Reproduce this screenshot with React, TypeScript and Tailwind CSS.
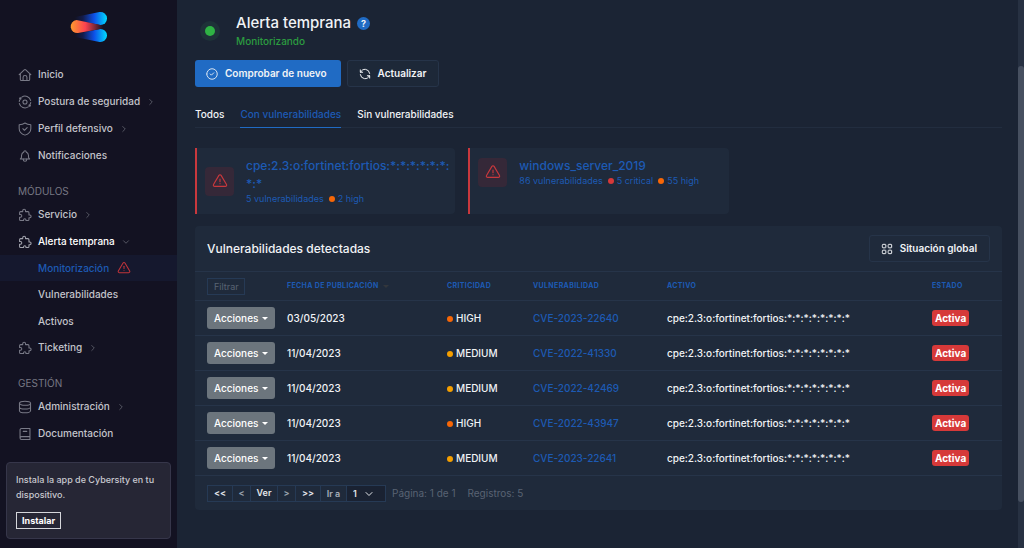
import React from 'react';
import { TbRefresh, TbCircleCheck, TbLayoutGrid, TbAlertTriangle, TbChevronRight, TbChevronDown, TbBell } from 'react-icons/tb';

const stroke = {
    viewBox: '0 0 24 24',
    fill: 'none',
    stroke: 'currentColor',
    strokeWidth: 1.8,
    strokeLinecap: 'round' as const,
    strokeLinejoin: 'round' as const,
};

const HomeIcon = () => (
    <svg {...stroke} className="size-3.5">
        <path d="M2 11.5l8.700-8.300a1.900 1.900 0 0 1 2.600 0L22 11.500M4 10v9.500A2 2 0 0 0 6 21.500h12a2 2 0 0 0 2-2V10M8.700 21.500V16a3.300 3.300 0 0 1 6.600 0v5.500" />
    </svg>
);

const PuzzleIcon = () => (
    <svg {...stroke} className="size-3.5">
        <path d="M17 21.5h-3.4v-1.2a2 2 0 0 0-4 0v1.2H4.5a1.8 1.8 0 0 1-1.8-1.8v-4h1.6a2.2 2.2 0 0 0 0-4.4H2.700V8a1.8 1.8 0 0 1 1.8-1.8h3.600V4.600a2.400 2.400 0 0 1 4.800 0v1.600H17A1.800 1.800 0 0 1 18.800 8v4h1.400a2.300 2.300 0 0 1 0 4.600h-1.400v3.100a1.800 1.800 0 0 1-1.800 1.800z" />
    </svg>
);

const PostureIcon = () => (
    <svg {...stroke} className="size-3.5">
        <path d="M2.200 14.500A10 10 0 0 0 17.500 20.400M21.800 9.500A10 10 0 0 0 6.500 3.600M2.200 11a10 10 0 0 1 .8-2.500M21.800 13a10 10 0 0 1-.8 2.500" />
        <circle cx="12" cy="12" r="3.500" />
        <circle cx="4" cy="6" r="1.200" fill="currentColor" />
        <circle cx="20" cy="18" r="1.200" fill="currentColor" />
    </svg>
);

const ShieldIcon = () => (
    <svg {...stroke} className="size-3.5">
        <path d="M12 1.700c2.800 2 6 2.900 10 3v6.300c0 5.500-4 9.500-10 11.500-6-2-10-6-10-11.500V4.700c4-.1 7.200-1 10-3zM8.300 11.500l2.700 2.700 4.700-4.700" />
    </svg>
);

const BookIcon = () => (
    <svg {...stroke} className="size-3.5">
        <path d="M3.500 19V5A2.500 2.500 0 0 1 6 2.500H20.500v19H6a2.500 2.500 0 0 1 0-5H20.500M9 7.500h6" />
    </svg>
);

const DatabaseIcon = () => (
    <svg {...stroke} className="size-3.5">
        <ellipse cx="12" cy="5.500" rx="9.500" ry="3.500" />
        <path d="M2.500 5.500v13c0 2 4.300 3.500 9.500 3.500s9.500-1.500 9.500-3.500v-13M2.500 12c0 2 4.300 3.500 9.500 3.500s9.500-1.500 9.500-3.500" />
    </svg>
);

const Logo = () => (
    <svg viewBox="0 0 38 32" className="w-[38px] h-8">
        <defs>
            <linearGradient id="blue" x1="0" x2="1">
                <stop offset="0" stopColor="#131222" />
                <stop offset="0.25" stopColor="#131c4c" />
                <stop offset="0.6" stopColor="#0d50e8" />
                <stop offset="1" stopColor="#00dcff" />
            </linearGradient>
            <linearGradient id="orange" x1="0" x2="1">
                <stop offset="0" stopColor="#ff9a2e" />
                <stop offset="0.45" stopColor="#fb4350" />
                <stop offset="1" stopColor="#131222" />
            </linearGradient>
        </defs>
        <path d="M5 6L29.500 1.100A6.500 6.500 0 1 1 30 14L5 9z" fill="url(#blue)" />
        <path d="M5 23L30 18A6.500 6.500 0 1 1 29.500 30.900L5 26z" fill="url(#blue)" />
        <path d="M6.500 9L33 14.500V17.500L8 22A6.500 6.500 0 1 1 6.500 9z" fill="url(#orange)" />
    </svg>
);

type NavItemProps = {
    icon: React.ReactNode;
    label: string;
    arrow?: 'right' | 'down';
};

const NavItem = ({ icon, label, arrow }: NavItemProps) => (
    <a href="#" className={`flex items-center h-[27px] pl-[18px] ${arrow === 'down' ? 'text-white' : 'text-[#c3c4cb]'}`}>
        <span className={`w-5 ${arrow === 'down' ? 'text-[#a3a4ae]' : 'text-[#797a87]'}`}>{icon}</span>
        <span>{label}</span>
        {arrow === 'right' && <TbChevronRight className="size-2.5 ml-1.5 text-[#62636f]" />}
        {arrow === 'down' && <TbChevronDown className="size-2.5 ml-1.5 text-[#62636f]" />}
    </a>
);

const NavHeading = ({ children }: { children: React.ReactNode }) => (
    <h2 className="mt-3.5 h-[18px] leading-4 pl-[18px] font-normal text-[#777884]">{children}</h2>
);

const Sidebar = () => (
    <aside className="w-[177px] shrink-0 bg-[#131222] flex flex-col font-medium">
        <a href="#" className="self-center mt-[11px] mb-[18px]" aria-label="Cybersity">
            <Logo />
        </a>
        <nav>
            <NavItem icon={<HomeIcon />} label="Inicio" />
            <NavItem icon={<PostureIcon />} label="Postura de seguridad" arrow="right" />
            <NavItem icon={<ShieldIcon />} label="Perfil defensivo" arrow="right" />
            <NavItem icon={<TbBell className="size-3.5" strokeWidth={1.8} />} label="Notificaciones" />

            <NavHeading>MÓDULOS</NavHeading>
            <NavItem icon={<PuzzleIcon />} label="Servicio" arrow="right" />
            <NavItem icon={<PuzzleIcon />} label="Alerta temprana" arrow="down" />
            <a href="#" className="flex items-center h-[26px] pl-[38px] bg-[#15182e] text-[#1d5ab4]">
                Monitorización
                <TbAlertTriangle className="size-3.5 ml-2 text-[#c0343a]" strokeWidth={1.8} />
            </a>
            <a href="#" className="flex items-center h-[27px] pl-[38px] text-[#c3c4cb]">Vulnerabilidades</a>
            <a href="#" className="flex items-center h-[26px] pl-[38px] text-[#c3c4cb]">Activos</a>
            <NavItem icon={<PuzzleIcon />} label="Ticketing" arrow="right" />

            <NavHeading>GESTIÓN</NavHeading>
            <NavItem icon={<DatabaseIcon />} label="Administración" arrow="right" />
            <NavItem icon={<BookIcon />} label="Documentación" />
        </nav>
        <div className="mx-1.5 mt-[15px] px-[9px] py-[9px] rounded bg-[#262635] border border-[#36364a] text-[9px] leading-[15px] text-[#c8c9d0]">
            <p>Instala la app de Cybersity en tu dispositivo.</p>
            <button className="mt-2.5 h-[17px] px-[5px] border border-[#d5d6db] leading-[15px] font-bold text-white">Instalar</button>
        </div>
    </aside>
);

const Dot = ({ className }: { className: string }) => (
    <span className={`inline-block size-1.5 rounded-full mr-[3px] ${className}`} />
);

const AssetCard = ({ title, children }: { title: string; children: React.ReactNode }) => (
    <a href="#" className="flex rounded-r-sm bg-[#1f2a3b] border-l-2 border-[#c9383d] text-[#1d5ab4] min-h-[66px] py-[9px] pl-2 pr-1">
        <div className="flex items-center gap-3 self-start min-w-0">
            <span className="size-[29px] shrink-0 rounded-sm bg-[#352838] text-[#c9383d] flex items-center justify-center">
                <TbAlertTriangle className="size-4" strokeWidth={1.7} />
            </span>
            <div className="min-w-0">
                <div className="text-xs leading-[18px] font-medium wrap-anywhere">{title}</div>
                <div className="flex items-center gap-[5px] text-[9px] leading-3">{children}</div>
            </div>
        </div>
    </a>
);

const rows = [
    { date: '03/05/2023', level: 'HIGH', cve: 'CVE-2023-22640' },
    { date: '11/04/2023', level: 'MEDIUM', cve: 'CVE-2022-41330' },
    { date: '11/04/2023', level: 'MEDIUM', cve: 'CVE-2022-42469' },
    { date: '11/04/2023', level: 'HIGH', cve: 'CVE-2022-43947' },
    { date: '11/04/2023', level: 'MEDIUM', cve: 'CVE-2023-22641' },
];

const VulnerabilityTable = () => (
    <table className="w-full table-fixed text-left">
        <colgroup>
            <col className="w-[86px]" />
            <col className="w-[160px]" />
            <col className="w-[86px]" />
            <col className="w-[134px]" />
            <col />
            <col className="w-[76px]" />
        </colgroup>
        <thead>
            <tr className="h-[29px] border-y border-[#263449] text-[7px] text-[#1d5ab4]">
                <th className="pl-3">
                    <input
                        aria-label="Filtrar"
                        placeholder="Filtrar"
                        className="block w-[38px] h-[17px] pl-1.5 border border-[#263a55] text-[9px] font-normal placeholder:text-[#596373]"
                    />
                </th>
                <th className="pl-1.5 font-bold tracking-wider">
                    <span className="flex items-center gap-1">
                        FECHA DE PUBLICACIÓN
                        <span className="border-x-3 border-t-3 border-x-transparent border-t-[#33363c]" />
                    </span>
                </th>
                <th className="pl-1.5 font-bold tracking-wider">CRITICIDAD</th>
                <th className="pl-1.5 font-bold tracking-wider">VULNERABILIDAD</th>
                <th className="pl-1.5 font-bold tracking-wider">ACTIVO</th>
                <th className="pl-1.5 font-bold tracking-wider">ESTADO</th>
            </tr>
        </thead>
        <tbody className="font-medium">
            {rows.map((row) => (
                <tr key={row.cve} className="h-[35px] border-b border-[#263449]">
                    <td className="pl-3">
                        <button className="flex items-center gap-1 h-[22px] px-[7px] rounded-[3px] bg-[#6c757d] text-white">
                            Acciones
                            <span className="border-x-3 border-t-3 border-x-transparent border-t-white" />
                        </button>
                    </td>
                    <td className="pl-1.5">{row.date}</td>
                    <td className="pl-1.5">
                        <Dot className={row.level === 'HIGH' ? 'bg-[#f76707]' : 'bg-[#f59f00]'} />
                        {row.level}
                    </td>
                    <td className="pl-1.5">
                        <a href="#" className="text-[#1d5ab4]">{row.cve}</a>
                    </td>
                    <td className="pl-1.5">cpe:2.3:o:fortinet:fortios:*:*:*:*:*:*:*:*</td>
                    <td className="pl-1.5">
                        <span className="inline-block h-4 leading-4 px-[3px] rounded-[3px] bg-[#d63939] font-bold text-white">Activa</span>
                    </td>
                </tr>
            ))}
        </tbody>
    </table>
);

const Pagination = () => (
    <div className="flex items-center h-[34px] pl-3">
        <div className="flex h-[17px] border border-[#263a55] divide-x divide-[#263a55] text-[9px] font-semibold text-[#e3e6ea]">
            <button className="w-[25px]">&lt;&lt;</button>
            <button className="w-[18px] text-[#9aa2ae]">&lt;</button>
            <button className="w-[27px]">Ver</button>
            <button className="w-[18px] text-[#9aa2ae]">&gt;</button>
            <button className="w-[25px]">&gt;&gt;</button>
            <label htmlFor="page" className="w-[26px] leading-[15px] text-center text-[#a8afba]">Ir a</label>
            <span className="relative w-[38px] bg-[#1a2232]">
                <select id="page" className="appearance-none w-full h-full pl-1.5 leading-[15px] outline-none">
                    <option>1</option>
                </select>
                <TbChevronDown className="absolute right-2.5 top-0.5 size-3 pointer-events-none" />
            </span>
        </div>
        <span className="ml-1.5 text-[#596373]">Página: 1 de 1</span>
        <span className="ml-3 text-[#596373]">Registros: 5</span>
    </div>
);

const App = () => {
    return (
        <div className="flex min-h-screen bg-[#1b2434] font-['Inter',sans-serif] text-[10px] text-[#f1f3f6]">
            <Sidebar />
            <main className="flex-1 min-w-0 pl-[18px] pr-4">
                <header className="flex items-center mt-[13px]">
                    <span className="size-5 ml-[5px] mr-4 rounded-full bg-[#1e3238] flex items-center justify-center">
                        <span className="size-2.5 rounded-full bg-[#2fb344]" />
                    </span>
                    <div>
                        <h1 className="flex items-center gap-1.5 text-[15px] leading-5 font-medium">
                            Alerta temprana
                            <button className="size-[13px] rounded-full bg-[#206bc4] text-[9px] leading-[13px] font-bold">?</button>
                        </h1>
                        <p className="leading-4 text-[#2b9c40] font-medium">Monitorizando</p>
                    </div>
                </header>

                <div className="flex gap-1.5 mt-[11px] font-semibold">
                    <button className="flex items-center gap-1.5 h-[27px] pl-2.5 pr-3.5 rounded-[3px] bg-[#206bc4]">
                        <TbCircleCheck className="size-3.5" strokeWidth={1.5} />
                        Comprobar de nuevo
                    </button>
                    <button className="flex items-center gap-1.5 h-[27px] pl-2.5 pr-3 rounded-[3px] bg-[#1d2838] border border-[#263449]">
                        <TbRefresh className="size-3.5" strokeWidth={1.7} />
                        Actualizar
                    </button>
                </div>

                <nav className="flex gap-4 h-[29px] mt-3 border-b border-[#222d3f] font-medium">
                    <a href="#" className="leading-[31px]">Todos</a>
                    <a href="#" className="leading-[31px] h-[29px] border-b border-[#206bc4] text-[#1d5ab4]">Con vulnerabilidades</a>
                    <a href="#" className="leading-[31px]">Sin vulnerabilidades</a>
                </nav>

                <div className="grid grid-cols-3 gap-[13px] mt-5">
                    <AssetCard title="cpe:2.3:o:fortinet:fortios:*:*:*:*:*:*:*:*">
                        <span>5 vulnerabilidades</span>
                        <span><Dot className="bg-[#f76707]" />2 high</span>
                    </AssetCard>
                    <AssetCard title="windows_server_2019">
                        <span>86 vulnerabilidades</span>
                        <span><Dot className="bg-[#d63939]" />5 critical</span>
                        <span><Dot className="bg-[#f76707]" />55 high</span>
                    </AssetCard>
                </div>

                <section className="mt-3 mb-9 rounded-sm bg-[#1f2a3b]">
                    <div className="flex items-center justify-between h-[45px] px-3">
                        <h2 className="text-xs font-medium">Vulnerabilidades detectadas</h2>
                        <button className="flex items-center gap-1.5 h-[27px] pl-2.5 pr-3 rounded-[3px] border border-[#263449] font-semibold">
                            <TbLayoutGrid className="size-3.5" strokeWidth={1.7} />
                            Situación global
                        </button>
                    </div>
                    <VulnerabilityTable />
                    <Pagination />
                </section>
            </main>
            <div className="w-1.5 shrink-0 bg-[#273142]">
                <div className="mt-[66px] h-[436px] rounded-full bg-[#475060]" />
            </div>
        </div>
    );
};

export default App;
